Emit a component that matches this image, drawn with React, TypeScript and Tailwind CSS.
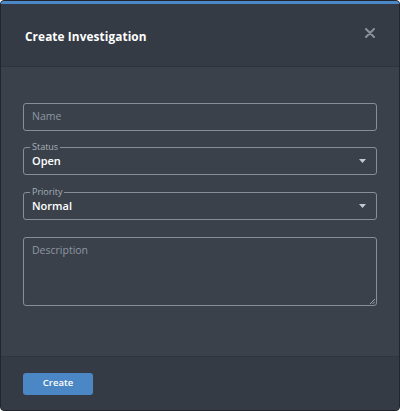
import React from "react";

function Caret() {
  return (
    <svg width="7" height="4" viewBox="0 0 7 4" className="shrink-0">
      <path d="M0 0 L7 0 L3.5 4 Z" fill="#c3c9d1" />
    </svg>
  );
}

function SelectField({ label, value, className }: { label: string; value: string; className?: string }) {
  return (
    <div className={"relative h-[28px] rounded-[3px] border border-[#858e99] flex items-center justify-between pl-[8px] pr-[10px] " + (className ?? "")}>
      <span className="absolute -top-[7px] left-[6px] px-[2px] bg-[#3a414b] text-[9px] leading-[12px] text-[#a9b0b9]">
        {label}
      </span>
      <span className="text-[11px] font-semibold text-white mt-[1px]">{value}</span>
      <Caret />
    </div>
  );
}

export default function App() {
  return (
    <div
      className="w-[400px] h-[411px] flex flex-col overflow-hidden rounded-[4px] border border-[#22262c] bg-[#3a414b]"
      style={{ fontFamily: '"Open Sans", "Noto Sans", sans-serif' }}
    >
      <div className="h-[3px] bg-[#4a88c8] shrink-0" />
      <div className="h-[63px] shrink-0 flex items-center justify-between pl-[24px] pr-[24px] bg-[#353b44] border-b border-[#2e333a]">
        <span className="text-[11.8px] font-bold text-white tracking-[0.1px] mt-[4px]">Create Investigation</span>
        <svg width="10" height="10" viewBox="0 0 10 10" className="-mt-[4px]">
          <path d="M1 1 L9 9 M9 1 L1 9" stroke="#8a919c" strokeWidth="2" strokeLinecap="round" />
        </svg>
      </div>
      <div className="flex-1 flex flex-col px-[22px] pt-[36px]">
        <div className="h-[28px] rounded-[3px] border border-[#858e99] flex items-center pl-[8px]">
          <span className="text-[10.5px] text-[#8e97a2]">Name</span>
        </div>
        <SelectField label="Status" value="Open" className="mt-[16px]" />
        <SelectField label="Priority" value="Normal" className="mt-[17px]" />
        <div className="relative mt-[17px] h-[69px] rounded-[3px] border border-[#858e99] pl-[8px] pt-[5px] text-[10.5px] leading-[14px]">
          <span className="text-[#8e97a2]">Description</span>
          <svg width="5" height="5" viewBox="0 0 5 5" className="absolute right-[1px] bottom-[1px]">
            <path d="M5 0 L0 5 M5 2.5 L2.5 5" stroke="#9aa2ac" strokeWidth="1" />
          </svg>
        </div>
      </div>
      <div className="h-[54px] shrink-0 bg-[#353b44] border-t border-[#30353c] flex items-center px-[22px]">
        <button className="w-[70px] h-[22px] rounded-[3px] bg-[#4b87c5] text-white text-[9.5px] font-semibold">
          Create
        </button>
      </div>
    </div>
  );
}
